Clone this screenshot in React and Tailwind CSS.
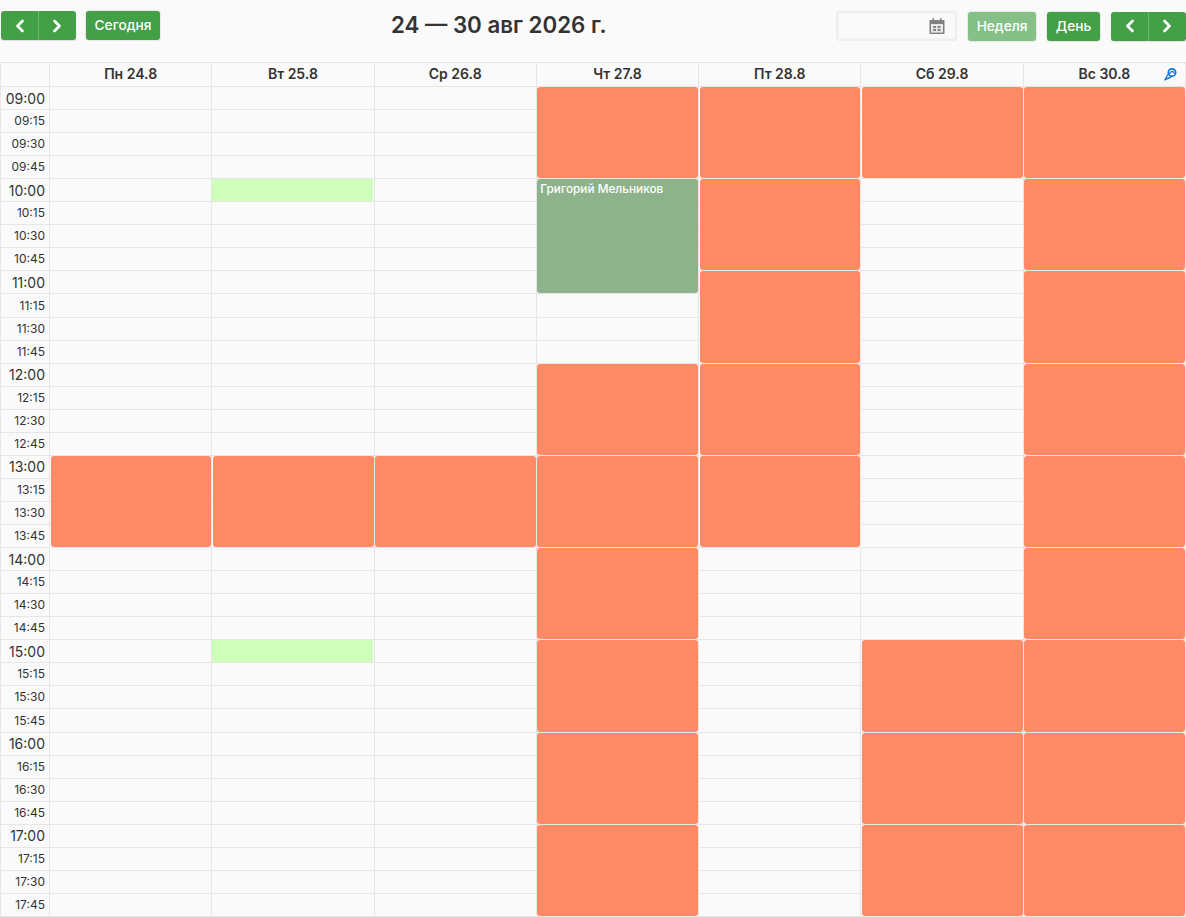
import React from "react";

const days = ["Пн 24.8", "Вт 25.8", "Ср 26.8", "Чт 27.8", "Пт 28.8", "Сб 29.8", "Вс 30.8"];
const hours = [9, 10, 11, 12, 13, 14, 15, 16, 17];
const times = hours.flatMap((h) =>
  ["00", "15", "30", "45"].map((m) => `${String(h).padStart(2, "0")}:${m}`)
);

const blocks = [
  [0, 16], [1, 16], [2, 16],
  [3, 0], [3, 12], [3, 16], [3, 20], [3, 24], [3, 28], [3, 32],
  [4, 0], [4, 4], [4, 8], [4, 12], [4, 16],
  [5, 0], [5, 24], [5, 28], [5, 32],
  [6, 0], [6, 4], [6, 8], [6, 12], [6, 16], [6, 20], [6, 24], [6, 28], [6, 32],
];

function Chevron({ dir }) {
  return (
    <svg width="12" height="14" viewBox="0 0 12 14" fill="none" stroke="white" strokeWidth="2.7" strokeLinecap="round" strokeLinejoin="round">
      {dir === "l" ? <path d="M8.5 2 3.5 7l5 5" /> : <path d="M3.5 2l5 5-5 5" />}
    </svg>
  );
}

function NavGroup() {
  return (
    <div className="flex h-[29px] w-[75px] rounded-[3px] bg-[#43a047] shadow-[0_1px_1px_rgba(0,0,0,0.12)]">
      <div className="flex w-[38px] items-center justify-center border-r border-[#6fb872]">
        <Chevron dir="l" />
      </div>
      <div className="flex w-[36px] items-center justify-center">
        <Chevron dir="r" />
      </div>
    </div>
  );
}

function Btn({ children, className = "" }) {
  return (
    <div className={`flex h-[29px] items-center justify-center rounded-[3px] text-[13.7px] font-medium text-white shadow-[0_0_1px_1px_rgba(0,0,0,0.08)] ${className}`}>
      {children}
    </div>
  );
}

export default function App() {
  return (
    <div className="h-[917px] w-[1186px] overflow-hidden bg-[#fafafa] font-['Inter',sans-serif] text-[#333]">
      <div className="relative flex h-[62px] items-start pt-[11px]">
        <div className="ml-px"><NavGroup /></div>
        <Btn className="ml-[10px] w-[74px] bg-[#43a047]">Сегодня</Btn>
        <div className="absolute left-[391px] top-[11px] text-[22.3px] font-semibold leading-[28px] text-[#333]">24 — 30 авг 2026 г.</div>
        <div className="ml-auto flex items-center">
          <div className="flex h-[30px] w-[121px] items-center justify-end rounded-[3px] border-2 border-[#eeeeee] bg-[#fafafa] pr-[10px] shadow-[inset_0_0_3px_rgba(0,0,0,0.05)]">
            <svg width="16" height="18" viewBox="0 0 16 18" fill="#808080">
              <path d="M1.5 3H3.5V1h1.4v2h6.2V1h1.4v2h2a1 1 0 0 1 1 1v12a1 1 0 0 1-1 1h-13a1 1 0 0 1-1-1V4a1 1 0 0 1 1-1z" />
              <rect x="2" y="7" width="12" height="8.6" fill="#e8e8e8" />
              <rect x="4.2" y="9" width="2.8" height="2" fill="#808080" />
              <rect x="8.6" y="9" width="2.8" height="2" fill="#808080" />
              <rect x="4.2" y="12" width="2.8" height="2" fill="#808080" />
              <rect x="8.6" y="12" width="2.8" height="2" fill="#808080" />
            </svg>
          </div>
          <Btn className="ml-[11px] w-[68px] bg-[#85c087]">Неделя</Btn>
          <Btn className="ml-[11px] w-[53px] bg-[#43a047]">День</Btn>
          <div className="ml-[11px]"><NavGroup /></div>
        </div>
      </div>

      <div className="grid h-[855px] grid-cols-[50px_repeat(7,1fr)] grid-rows-[24px_repeat(36,1fr)] border-t border-[#e6e6e6] text-[#333]">
        <div className="border-r border-l border-b border-[#e6e6e6]" style={{ gridColumn: 1, gridRow: 1 }} />
        {days.map((d, i) => (
          <div
            key={d}
            className="relative flex items-center justify-center border-r border-b border-[#e6e6e6] pb-px text-[14px] font-semibold leading-none text-[#333]"
            style={{ gridColumn: i + 2, gridRow: 1 }}
          >
            {d}
            {i === 6 && (
              <svg className="absolute right-[8px] top-[4px]" width="13" height="14" viewBox="0 0 13 14" fill="none" stroke="#1976d2" strokeWidth="1.7" strokeLinecap="round">
                <circle cx="8" cy="5.5" r="3.7" />
                <path d="M5.8 6.6a2.3 2.3 0 0 1 4.5-.4" strokeWidth="1.3" />
                <path d="M4.8 6.8C3.4 8 2.4 10 1.2 12.6c2.4-.8 4.8-1.8 6.4-3.2" strokeWidth="1.4" />
              </svg>
            )}
          </div>
        ))}

        {times.map((t, r) => (
          <React.Fragment key={t}>
            <div
              className={`flex items-center justify-end border-r border-l border-b border-[#e6e6e6] pr-[4px] text-[#333] ${
                r % 4 === 0 ? "text-[14px]" : "text-[12px]"
              }`}
              style={{ gridColumn: 1, gridRow: r + 2 }}
            >
              {t}
            </div>
            {days.map((d, c) => (
              <div
                key={d}
                className="border-r border-b border-[#e6e6e6]"
                style={{ gridColumn: c + 2, gridRow: r + 2 }}
              />
            ))}
          </React.Fragment>
        ))}

        {blocks.map(([c, r], i) => (
          <div
            key={i}
            className="mr-px mb-px ml-[0.5px] rounded-[3px] bg-[#ff8a65]"
            style={{ gridColumn: c + 2, gridRow: `${r + 2} / span 4` }}
          />
        ))}

        <div className="mr-px mb-px ml-[0.5px] overflow-hidden rounded-[3px] bg-[#8eb28b] px-[3px] text-[11.8px] leading-[21px] font-medium text-white" style={{ gridColumn: 5, gridRow: "6 / span 5" }}>
          Григорий Мельников
        </div>
        <div className="mr-[1.5px] mb-px bg-[#d0ffbc]" style={{ gridColumn: 3, gridRow: 6 }} />
        <div className="mr-[1.5px] mb-px bg-[#d0ffbc]" style={{ gridColumn: 3, gridRow: 26 }} />
      </div>
    </div>
  );
}
